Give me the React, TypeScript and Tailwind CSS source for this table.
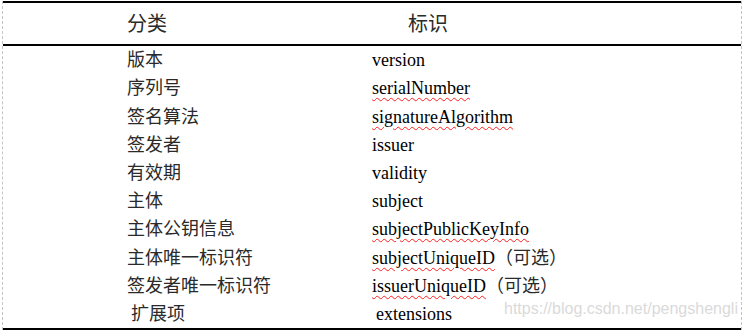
import React from "react";

type Row = { cn: string; en: string; wavy?: boolean; extra?: string; indent?: boolean };

const rows: Row[] = [
  { cn: "版本", en: "version" },
  { cn: "序列号", en: "serialNumber", wavy: true },
  { cn: "签名算法", en: "signatureAlgorithm", wavy: true },
  { cn: "签发者", en: "issuer" },
  { cn: "有效期", en: "validity" },
  { cn: "主体", en: "subject" },
  { cn: "主体公钥信息", en: "subjectPublicKeyInfo", wavy: true },
  { cn: "主体唯一标识符", en: "subjectUniqueID", wavy: true, extra: "（可选）" },
  { cn: "签发者唯一标识符", en: "issuerUniqueID", wavy: true, extra: "（可选）" },
  { cn: "扩展项", en: "extensions", indent: true },
];

export default function App() {
  return (
    <div
      className="relative w-[745px] h-[330px] bg-white pl-[2px] pt-[1px] text-black overflow-hidden"
      style={{ fontFamily: '"Liberation Serif", "Noto Sans CJK SC", serif' }}
    >
      <div className="w-[740px] h-[329px] border-x border-dashed border-[#c4c4c4] flex flex-col">
        <div className="h-[45px] border-y-2 border-black flex items-center text-[20px] leading-none text-[#2a2a2a]">
          <div className="w-[369px] pl-[124px]">分类</div>
          <div className="pl-[36px]">标识</div>
        </div>
        <div className="flex-1 flex flex-col">
          {rows.map((r) => (
            <div key={r.en} className="flex-1 flex items-center text-[18px] leading-none">
              <div
                className={
                  r.indent
                    ? "w-[369px] pl-[128px] text-[#2a2a2a]"
                    : "w-[369px] pl-[124px] text-[#2a2a2a]"
                }
              >
                {r.cn}
              </div>
              <div className={r.indent ? "pl-[4px]" : ""}>
                <span
                  className={
                    r.wavy
                      ? "underline decoration-wavy decoration-[#ff2020] decoration-1 underline-offset-[3px]"
                      : ""
                  }
                >
                  {r.en}
                </span>
                {r.extra && <span className="text-[#2a2a2a]">{r.extra}</span>}
              </div>
            </div>
          ))}
        </div>
        <div className="h-[2px] bg-black" />
      </div>
      <div
        className="absolute left-[504px] top-[301px] text-[16px] text-[#dadada] leading-none"
        style={{ fontFamily: '"Liberation Sans", Arial, sans-serif' }}
      >
        https://blog.csdn.net/pengshengli
      </div>
    </div>
  );
}
